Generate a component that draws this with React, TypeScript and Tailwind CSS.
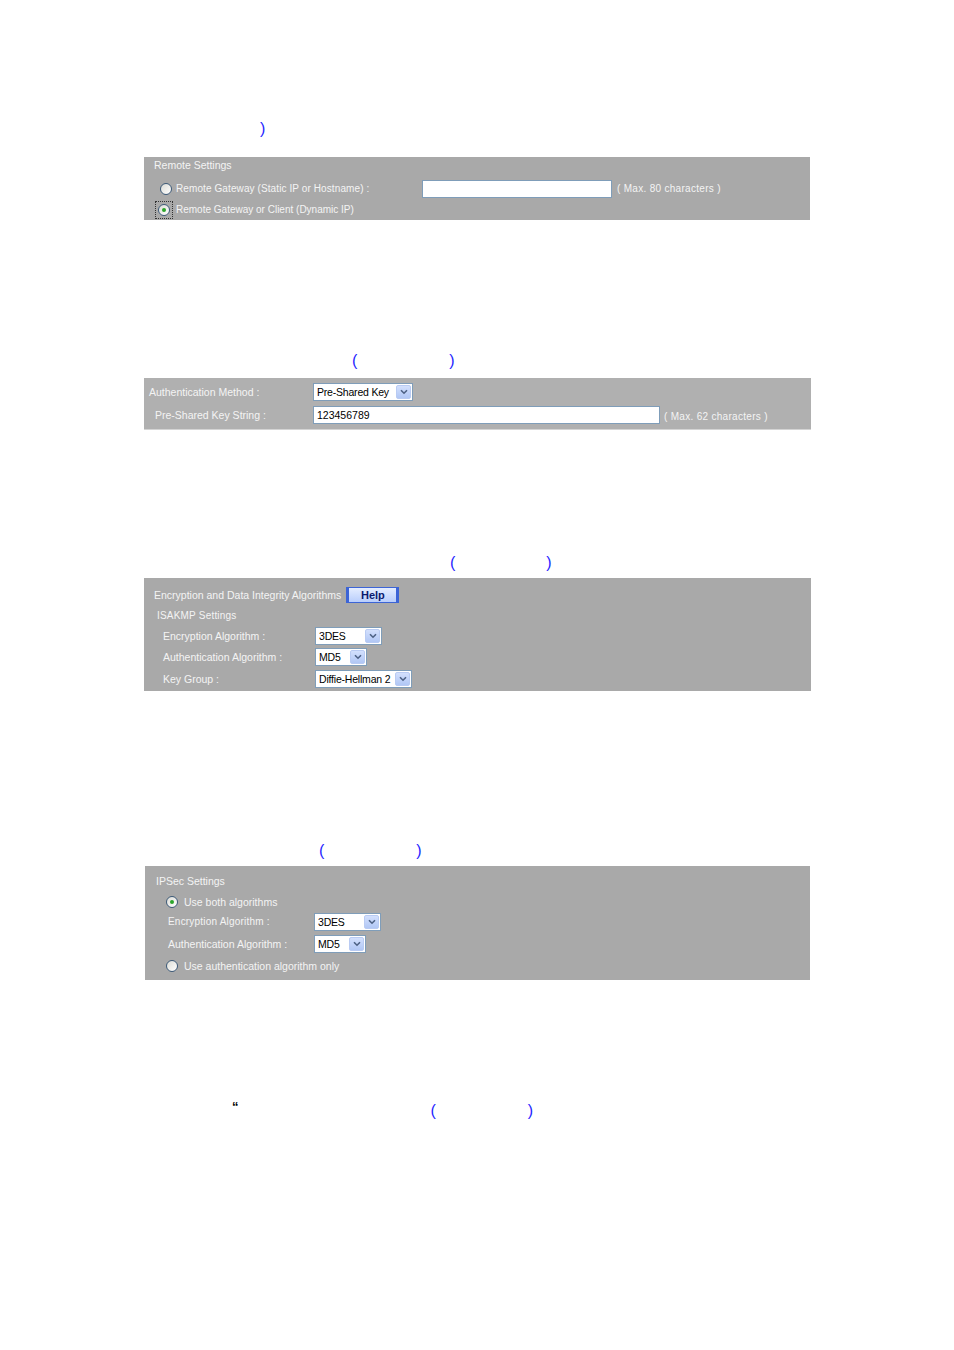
import React from 'react';

const font = "font-['Liberation_Sans',Arial,sans-serif]";

const Paren: React.FC<{ children: React.ReactNode; className?: string }> = ({ children, className }) => (
  <span className={`text-[16px] leading-[18px] text-[#1f1fff] ${className ?? ''}`}>{children}</span>
);

const Radio: React.FC<{ checked?: boolean }> = ({ checked }) => (
  <span className="flex h-[12px] w-[12px] shrink-0 items-center justify-center rounded-full border border-[#3d5a78] bg-gradient-to-br from-[#dcdcd6] to-white">
    {checked && <span className="h-[4px] w-[4px] rounded-full bg-[#2ba62b]" />}
  </span>
);

const Select: React.FC<{ value: string; width: string }> = ({ value, width }) => (
  <div className={`flex h-[18px] items-center border border-[#7f9db9] bg-white pl-[3px] pr-[1px] ${width}`}>
    <span className="flex-1 whitespace-nowrap text-[10.5px] leading-none tracking-[-0.2px] text-black">{value}</span>
    <span className="flex h-[14px] w-[15px] shrink-0 items-center justify-center rounded-[2px] border border-[#b9cbf3] bg-gradient-to-b from-[#d3e0fd] to-[#b1c7f5]">
      <svg width="8" height="6" viewBox="0 0 8 6">
        <path d="M1 1.2 L4 4.2 L7 1.2" fill="none" stroke="#4d6185" strokeWidth="1.6" />
      </svg>
    </span>
  </div>
);

const label = 'text-[10.5px] leading-none text-[#f4f4f4]';
const note = 'text-[10px] leading-none tracking-[0.3px] text-[#f4f4f4]';

export default function App() {
  return (
    <div className={`w-[954px] min-h-[1350px] bg-white pt-[120px] ${font}`}>
      {/* line 1 */}
      <div className="flex h-[18px] items-center pl-[260px]">
        <Paren>)</Paren>
      </div>

      {/* Remote settings */}
      <div className="ml-[144px] mt-[19px] h-[63px] w-[666px] bg-[#a9a9a9]">
        <div className={`flex h-[16px] items-center pl-[10px] ${label}`}>Remote Settings</div>
        <div className="mt-[6px] flex h-[19px] items-center">
          <span className="ml-[16px] flex"><Radio /></span>
          <span className="ml-[4px] w-[246px] text-[10px] leading-none tracking-[0.1px] text-[#f4f4f4]">Remote Gateway (Static IP or Hostname) :</span>
          <div className="h-[18px] w-[190px] border border-[#7f9db9] bg-white" />
          <span className={`ml-[5px] ${note}`}>( Max. 80 characters )</span>
        </div>
        <div className="mt-[2px] flex h-[20px] items-center">
          <span className="ml-[11px] flex h-[18px] w-[18px] items-center justify-center border border-dotted border-[#333]">
            <Radio checked />
          </span>
          <span className="ml-[3px] text-[10px] leading-none text-[#f4f4f4]">Remote Gateway or Client (Dynamic IP)</span>
        </div>
      </div>

      {/* line 2 */}
      <div className="mt-[132px] flex h-[18px] items-center pl-[352px]">
        <Paren>(</Paren>
        <Paren className="ml-[92px]">)</Paren>
      </div>

      {/* Authentication method */}
      <div className="ml-[144px] mt-[8px] w-[667px] border-b border-[#d4d4d4] bg-[#b0b0b0] pb-[5px] pt-[5px]">
        <div className="flex h-[18px] items-center">
          <span className={`ml-[5px] w-[164px] ${label}`}>Authentication Method :</span>
          <Select value="Pre-Shared Key" width="w-[100px]" />
        </div>
        <div className="mt-[5px] flex h-[18px] items-center">
          <span className={`ml-[11px] w-[158px] ${label}`}>Pre-Shared Key String :</span>
          <div className="flex h-[18px] w-[347px] items-center border border-[#7f9db9] bg-white pl-[3px] text-[10.5px] leading-none text-black">123456789</div>
          <span className={`ml-[4px] mt-[3px] ${note}`}>( Max. 62 characters )</span>
        </div>
      </div>

      {/* line 3 */}
      <div className="mt-[124px] flex h-[18px] items-center pl-[450px]">
        <Paren>(</Paren>
        <Paren className="ml-[91px]">)</Paren>
      </div>

      {/* ISAKMP */}
      <div className="ml-[144px] mt-[6px] w-[667px] bg-[#a9a9a9] pb-[3px] pt-[9px]">
        <div className="flex h-[16px] items-center">
          <span className={`ml-[10px] ${label}`}>Encryption and Data Integrity Algorithms</span>
          <button className="ml-[5px] flex h-[16px] w-[53px] items-center justify-center border border-x-[3px] border-[#3c64d6] bg-gradient-to-b from-[#e4edff] to-[#b9cefc] text-[11px] font-bold leading-none text-[#0a1a6e]">
            Help
          </button>
        </div>
        <div className="mt-[5px] flex h-[16px] items-center pl-[13px] text-[10px] leading-none tracking-[0.2px] text-[#f4f4f4]">ISAKMP Settings</div>
        <div className="mt-[3px] flex h-[18px] items-center">
          <span className={`ml-[19px] w-[152px] ${label}`}>Encryption Algorithm :</span>
          <Select value="3DES" width="w-[67px]" />
        </div>
        <div className="mt-[3px] flex h-[18px] items-center">
          <span className={`ml-[19px] w-[152px] ${label}`}>Authentication Algorithm :</span>
          <Select value="MD5" width="w-[52px]" />
        </div>
        <div className="mt-[4px] flex h-[18px] items-center">
          <span className={`ml-[19px] w-[152px] ${label}`}>Key Group :</span>
          <Select value="Diffie-Hellman 2" width="w-[97px]" />
        </div>
      </div>

      {/* line 4 */}
      <div className="mt-[151px] flex h-[18px] items-center pl-[319px]">
        <Paren>(</Paren>
        <Paren className="ml-[92px]">)</Paren>
      </div>

      {/* IPSec */}
      <div className="ml-[145px] mt-[6px] w-[665px] bg-[#a9a9a9] pb-[6px] pt-[7px]">
        <div className={`flex h-[16px] items-center pl-[11px] ${label}`}>IPSec Settings</div>
        <div className="mt-[5px] flex h-[16px] items-center">
          <span className="ml-[21px] flex"><Radio checked /></span>
          <span className={`ml-[6px] ${label}`}>Use both algorithms</span>
        </div>
        <div className="mt-[3px] flex h-[18px] items-center">
          <span className="ml-[23px] w-[146px] text-[10px] leading-none tracking-[0.2px] text-[#f4f4f4]">Encryption Algorithm :</span>
          <Select value="3DES" width="w-[67px]" />
        </div>
        <div className="mt-[4px] flex h-[18px] items-center">
          <span className={`ml-[23px] w-[146px] ${label}`}>Authentication Algorithm :</span>
          <Select value="MD5" width="w-[52px]" />
        </div>
        <div className="mt-[5px] flex h-[16px] items-center">
          <span className="ml-[21px] flex"><Radio /></span>
          <span className={`ml-[6px] ${label}`}>Use authentication algorithm only</span>
        </div>
      </div>

      {/* line 5 */}
      <div className="mt-[122px] flex h-[18px] items-center">
        <span className="ml-[232px] -mt-[10px] text-[13px] font-bold leading-none text-black">“</span>
        <Paren className="ml-[192px]">(</Paren>
        <Paren className="ml-[92px]">)</Paren>
      </div>
    </div>
  );
}
